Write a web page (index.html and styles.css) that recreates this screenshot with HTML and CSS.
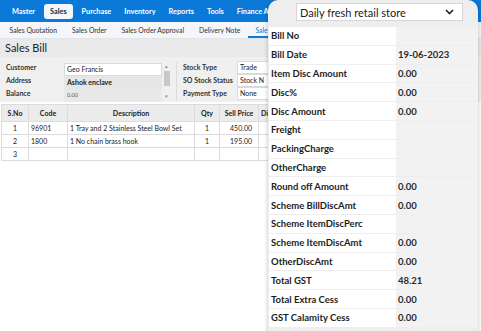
FILE: index.html
```html
<!DOCTYPE html>
<html lang="en">
<head>
    <meta charset="UTF-8">
    <meta name="viewport" content="width=device-width, initial-scale=1.0">
    <title>Sales Bill</title>
    <link rel="stylesheet" href="styles.css">
</head>
<body>
    <nav class="topnav">
        <span class="nav-item">Master</span>
        <span class="nav-item active">Sales</span>
        <span class="nav-item">Purchase</span>
        <span class="nav-item">Inventory</span>
        <span class="nav-item">Reports</span>
        <span class="nav-item">Tools</span>
        <span class="nav-item">Finance And</span>
    </nav>
    <div class="subnav">
        <span class="sub-item">Sales Quotation</span>
        <span class="sub-item">Sales Order</span>
        <span class="sub-item">Sales Order Approval</span>
        <span class="sub-item">Delivery Note</span>
        <span class="sub-item active">Sales</span>
    </div>

    <div class="page-title">Sales Bill</div>

    <div class="bill-form">
        <div class="form-col">
            <div class="field-labels">
                <span>Customer</span>
                <span>Address</span>
                <span>Balance</span>
            </div>
            <div class="field-inputs">
                <div class="input white">Geo Francis</div>
                <div class="input grey bold">Ashok enclave</div>
                <div class="input grey2 small">0.00</div>
            </div>
            <div class="scrollbar">
                <span class="arrow">&#9652;</span>
                <span class="thumb"></span>
                <span class="arrow">&#9662;</span>
            </div>
        </div>
        <div class="divider"></div>
        <div class="form-col right">
            <div class="field-labels">
                <span>Stock Type</span>
                <span>SO Stock Status</span>
                <span>Payment Type</span>
            </div>
            <div class="field-inputs short">
                <div class="input white">Trade</div>
                <div class="input white">Stock N</div>
                <div class="input white">None</div>
            </div>
        </div>
    </div>

    <table class="items">
        <thead>
            <tr>
                <th class="c-sno">S.No</th>
                <th class="c-code">Code</th>
                <th class="c-desc">Description</th>
                <th class="c-qty">Qty</th>
                <th class="c-price">Sell Price</th>
                <th>Disc</th>
            </tr>
        </thead>
        <tbody>
            <tr>
                <td class="center">1</td>
                <td>96901</td>
                <td>1 Tray and 2 Stainless Steel Bowl Set</td>
                <td class="center">1</td>
                <td class="num">450.00</td>
                <td></td>
            </tr>
            <tr>
                <td class="center">2</td>
                <td>1800</td>
                <td>1 No chain brass hook</td>
                <td class="center">1</td>
                <td class="num">195.00</td>
                <td></td>
            </tr>
            <tr>
                <td class="center">3</td>
                <td></td>
                <td></td>
                <td></td>
                <td></td>
                <td></td>
            </tr>
        </tbody>
    </table>

    <aside class="summary">
        <div class="store-select">
            <span>Daily fresh retail store</span>
            <svg width="9" height="6" viewBox="0 0 9 6"><path d="M1 1l3.5 3.5L8 1" fill="none" stroke="#222" stroke-width="1.6"/></svg>
        </div>
        <div class="summary-rows">
            <div class="s-row"><span class="s-label">Bill No</span><span class="s-value"></span></div>
            <div class="s-row"><span class="s-label">Bill Date</span><span class="s-value">19-06-2023</span></div>
            <div class="s-row"><span class="s-label">Item Disc Amount</span><span class="s-value">0.00</span></div>
            <div class="s-row"><span class="s-label">Disc%</span><span class="s-value">0.00</span></div>
            <div class="s-row"><span class="s-label">Disc Amount</span><span class="s-value">0.00</span></div>
            <div class="s-row"><span class="s-label">Freight</span><span class="s-value"></span></div>
            <div class="s-row"><span class="s-label">PackingCharge</span><span class="s-value"></span></div>
            <div class="s-row"><span class="s-label">OtherCharge</span><span class="s-value"></span></div>
            <div class="s-row"><span class="s-label">Round off Amount</span><span class="s-value">0.00</span></div>
            <div class="s-row"><span class="s-label">Scheme BillDiscAmt</span><span class="s-value">0.00</span></div>
            <div class="s-row"><span class="s-label">Scheme ItemDiscPerc</span><span class="s-value"></span></div>
            <div class="s-row"><span class="s-label">Scheme ItemDiscAmt</span><span class="s-value">0.00</span></div>
            <div class="s-row"><span class="s-label">OtherDiscAmt</span><span class="s-value">0.00</span></div>
            <div class="s-row"><span class="s-label">Total GST</span><span class="s-value">48.21</span></div>
            <div class="s-row"><span class="s-label">Total Extra Cess</span><span class="s-value">0.00</span></div>
            <div class="s-row"><span class="s-label">GST Calamity Cess</span><span class="s-value">0.00</span></div>
        </div>
    </aside>
</body>
</html>
```

FILE: styles.css
```css
body {
    margin: 0;
    font-family: Lato, "Open Sans", sans-serif;
    background: #fff;
    color: #222;
    width: 481px;
    height: 331px;
    overflow: hidden;
    position: relative;
}

.topnav {
    display: flex;
    align-items: center;
    gap: 1px;
    height: 22px;
    padding-left: 6px;
    background-color: #0a79d8;
    white-space: nowrap;
    overflow: hidden;
}

.nav-item {
    padding: 3px 6px;
    font-size: 7.3px;
    font-weight: bold;
    color: #fff;
    border-radius: 3px;
}

.nav-item.active {
    margin: 0 2px;
    background-color: #f3f6fa;
    color: #1a2a3a;
}

.subnav {
    display: flex;
    align-items: stretch;
    height: 16px;
    padding-left: 2px;
    background-color: #f4f6f9;
    border-bottom: 1px solid #e1e4e8;
    white-space: nowrap;
    overflow: hidden;
}

.sub-item {
    display: flex;
    align-items: center;
    padding: 0 7.5px;
    font-size: 6.8px;
    color: #333;
}

.sub-item.active {
    color: #0a79d8;
    box-shadow: inset 0 -2px 0 #0a79d8;
}

.page-title {
    height: 18px;
    line-height: 18px;
    padding-left: 5px;
    font-size: 11px;
    color: #222;
    background-color: #e9e9e9;
}

.bill-form {
    display: flex;
    align-items: flex-start;
    height: 45px;
    padding-top: 4px;
    box-sizing: border-box;
    background-color: #f0f0f0;
}

.form-col {
    display: flex;
    align-items: flex-start;
}

.field-labels {
    display: flex;
    flex-direction: column;
    width: 58px;
    padding-left: 6px;
    font-size: 7px;
    font-weight: bold;
    color: #333;
}

.field-labels span {
    height: 13px;
    line-height: 13px;
}

.form-col.right .field-labels {
    width: 54px;
    padding-left: 6px;
}

.field-inputs {
    display: flex;
    flex-direction: column;
    width: 98px;
    padding-top: 2px;
}

.field-inputs.short {
    width: 40px;
    padding-top: 0;
}

.input {
    height: 13px;
    padding-left: 2px;
    font-size: 7px;
    line-height: 11px;
    color: #222;
    box-sizing: border-box;
    border: 1px solid #dadada;
}

.input.white {
    background-color: #fff;
}

.input.grey {
    background-color: #e6e6e6;
    border-color: #e6e6e6;
}

.input.grey2 {
    background-color: #e9e9e9;
    border-color: #e9e9e9;
}

.input.bold {
    font-weight: bold;
}

.input.small {
    font-size: 5.5px;
    color: #555;
}

.scrollbar {
    display: flex;
    flex-direction: column;
    align-items: center;
    width: 7px;
    height: 39px;
    margin-left: 1px;
    padding-top: 2px;
}

.scrollbar .arrow {
    font-size: 5px;
    line-height: 6px;
    color: #888;
}

.scrollbar .thumb {
    width: 6px;
    height: 15px;
    margin: 2px 0 7px;
    background-color: #c8c8c8;
}

.divider {
    width: 1px;
    height: 38px;
    margin: 1px 0 0 6px;
    background-color: #dcdcdc;
}

.items {
    margin: 2px 0 0 1px;
    border-collapse: collapse;
    font-size: 7px;
    color: #222;
}

.items th,
.items td {
    border: 1px solid #dcdcdc;
    padding: 0 2px;
    white-space: nowrap;
}

.items th {
    height: 16px;
    background-color: #ececec;
    font-weight: bold;
}

.items td {
    height: 12px;
    text-align: left;
}

.items .center {
    text-align: center;
}

.items .num {
    text-align: right;
    padding-right: 6px;
}

.c-sno { width: 22px; }
.c-code { width: 34px; }
.c-desc { width: 122px; }
.c-qty { width: 20px; }
.c-price { width: 34px; }

.summary {
    position: absolute;
    top: 0;
    left: 268px;
    width: 210px;
    height: 340px;
    background-color: #eeeeee;
    border-top-left-radius: 10px;
    border-top-right-radius: 10px;
    box-shadow: 0 0 4px rgba(0, 0, 0, 0.25);
    overflow: hidden;
}

.store-select {
    display: flex;
    align-items: center;
    justify-content: space-between;
    width: 167px;
    height: 18px;
    margin: 3px 0 6px 28px;
    padding: 0 8px 0 3px;
    box-sizing: border-box;
    background-color: #fff;
    border: 1px solid #d6d6d6;
    font-size: 11px;
    color: #222;
}

.summary-rows {
    display: flex;
    flex-direction: column;
    gap: 1px;
}

.s-row {
    display: flex;
    height: 17.8px;
    align-items: stretch;
}

.s-label {
    display: flex;
    align-items: center;
    width: 125px;
    margin-left: 1px;
    padding-left: 2px;
    background-color: #fff;
    font-size: 9.5px;
    font-weight: bold;
    color: #1e1e1e;
}

.s-value {
    display: flex;
    align-items: center;
    padding-left: 2px;
    flex: 1;
    background-color: #f2f2f2;
    font-size: 9.5px;
    font-weight: bold;
    color: #2a2a2a;
}
```
